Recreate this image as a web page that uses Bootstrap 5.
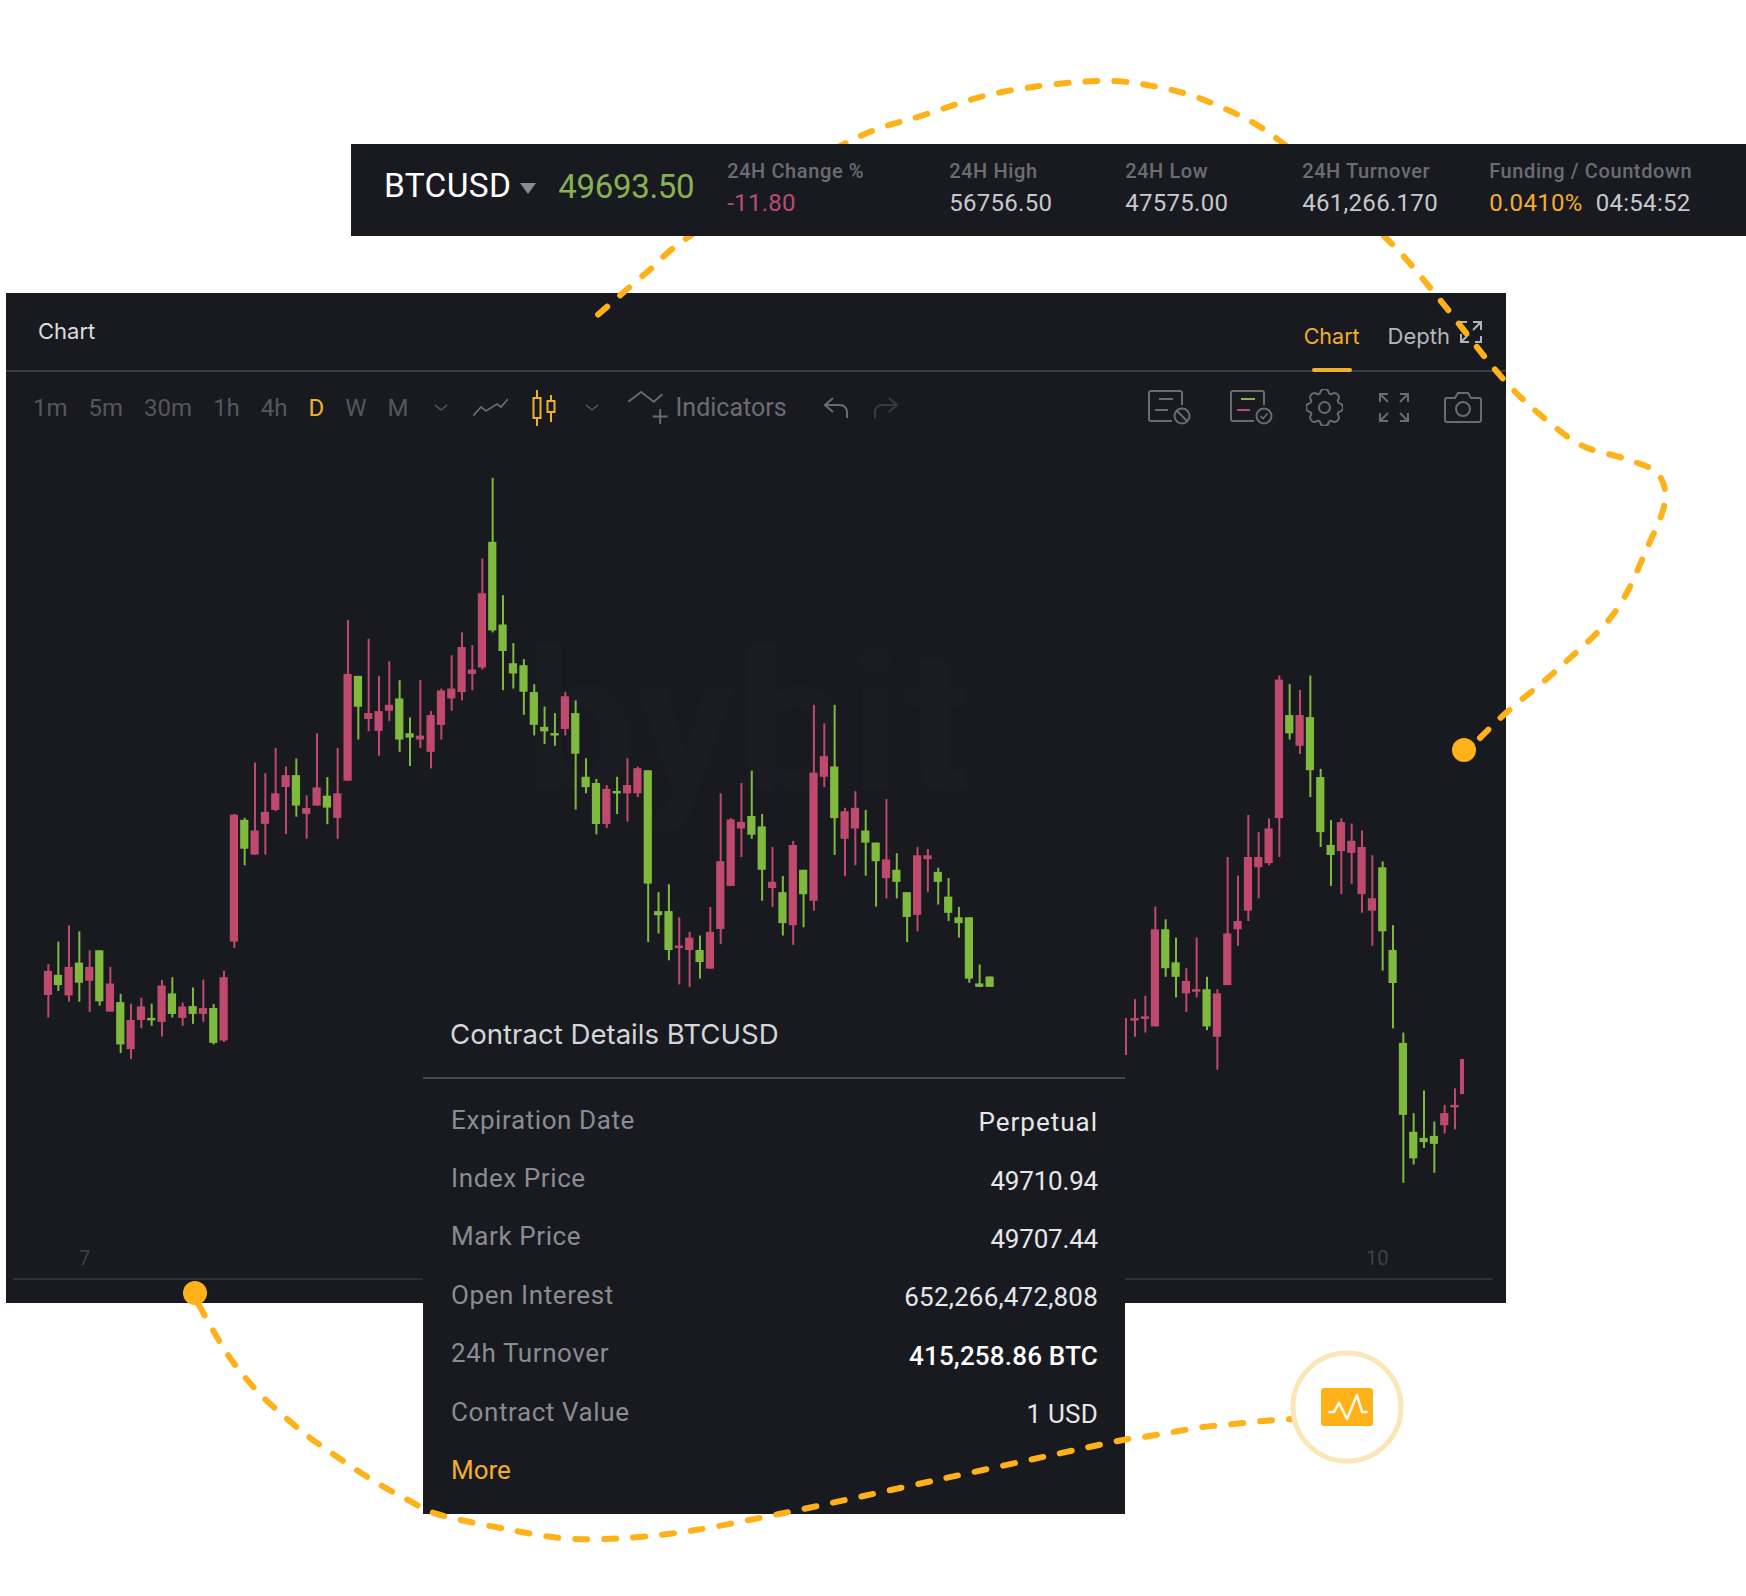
<!DOCTYPE html>
<html lang="en">
<head>
  <meta charset="UTF-8" />
  <meta name="viewport" content="width=device-width, initial-scale=1" />
  <title>BTCUSD Chart</title>
  <link href="https://cdn.jsdelivr.net/npm/bootstrap@5.3.2/dist/css/bootstrap.min.css" rel="stylesheet" />
  <style>
    body { margin: 0; background: #fff; font-family: Roboto, "Liberation Sans", sans-serif; }
    .stage { width: 1746px; height: 1596px; overflow: hidden; padding-top: 144px; }
    .ticker { margin-left: 351px; height: 92px; background: #181a20; padding-left: 33px; z-index: 3; }
    .sym { font-size: 33.5px; color: #fff; line-height: 1; letter-spacing: .3px; margin-top: -8px; }
    .caret { width: 0; height: 0; border-left: 8px solid transparent; border-right: 8px solid transparent; border-top: 11px solid #8c8c8c; margin: -4px 0 0 9px; }
    .last-price { font-size: 33px; color: #86b254; line-height: 1; margin: -7px 0 0 22px; width: 132px; letter-spacing: -.3px; }
    .tcol { line-height: 1; margin-top: -5px; }
    .tcol-chg { margin-left: 37px; width: 222px; }
    .tcol-hi { width: 176px; }
    .tcol-lo { width: 177px; }
    .tcol-to { width: 187px; }
    .tlabel { font-size: 20px; font-weight: 500; color: #6c6d73; letter-spacing: .6px; margin-bottom: 10px; white-space: nowrap; }
    .tval { font-size: 24px; color: #c8c9cc; letter-spacing: .3px; white-space: nowrap; }
    .tval-red { color: #b84d70; }
    .tval-org { color: #f2ae2e; margin-right: 13px; }

    .panel { margin: 57px 0 0 6px; width: 1500px; height: 1010px; background: #181a20; z-index: 1; }
    .panel-head { height: 79px; border-bottom: 2px solid #3b3c41; padding: 0 24px 0 32px; }
    .panel-title { font-family: Inter, Roboto, sans-serif; font-size: 22px; color: #dcdddf; }
    .head-tab { font-family: Inter, Roboto, sans-serif; font-size: 22px; color: #b5b6ba; height: 77px; line-height: 86px; }
    .head-tab-on { color: #f2ae2e; font-size: 21.5px; margin-right: 28px; }
    .head-tab-on::after { content: ""; position: absolute; left: 8px; right: 8px; bottom: -2px; height: 4px; border-radius: 2px; background: #f2ae2e; }
    .expand-mini { margin-left: 10px; }
    .tools { height: 73px; padding: 0 24px 2px 27px; color: #55575d; font-size: 24px; }
    .tools-left { gap: 21px; }
    .tool-candle { margin-left: 3px; }
    .tool-chev2 { margin: 0 8px 0 8px; }
    .ind-label { color: #6b6c72; margin-left: 7px; font-size: 25px; }
    .tool-undo { margin-left: 16px; }
    .tool-redo { margin-left: 3px; }
    .tools-right svg { display: block; }
    .tool-on { color: #f2ae2e; }
    .chart-svg { display: block; }

    .details { left: 417px; top: 697px; width: 702px; height: 524px; background: #181a20; }
    .details-title { font-family: Inter, Roboto, sans-serif; font-size: 27.6px; color: #d5d6d8; height: 89px; padding: 26px 0 0 27px; line-height: 36px; border-bottom: 2px solid #47484d; }
    .details-body { padding: 12px 27px 0 28px; }
    .drow { height: 58.4px; font-size: 26px; }
    .dlabel { color: #8b8c90; letter-spacing: .6px; }
    .dval { color: #e6e7e8; margin-top: 5px; letter-spacing: -.2px; }
    .dval-wide { letter-spacing: .2px; }
    .dval-word { letter-spacing: 1px; }
    .dval-strong { color: #fff; font-weight: 500; }
    .dmore { color: #f2ae2e; }

    .overlay { left: 0; top: 0; z-index: 2; pointer-events: none; }
  </style>
</head>
<body>
  <div class="stage position-relative">

    <div class="ticker d-flex align-items-center position-relative">
      <div class="sym">BTCUSD</div>
      <div class="caret"></div>
      <div class="last-price">49693.50</div>
      <div class="tcol tcol-chg">
        <div class="tlabel">24H Change %</div>
        <div class="tval tval-red">-11.80</div>
      </div>
      <div class="tcol tcol-hi">
        <div class="tlabel">24H High</div>
        <div class="tval">56756.50</div>
      </div>
      <div class="tcol tcol-lo">
        <div class="tlabel">24H Low</div>
        <div class="tval">47575.00</div>
      </div>
      <div class="tcol tcol-to">
        <div class="tlabel">24H Turnover</div>
        <div class="tval">461,266.170</div>
      </div>
      <div class="tcol">
        <div class="tlabel">Funding / Countdown</div>
        <div class="tval"><span class="tval-org">0.0410%</span>04:54:52</div>
      </div>
    </div>

    <div class="panel position-relative">
      <div class="panel-head d-flex align-items-center justify-content-between">
        <div class="panel-title">Chart</div>
        <div class="d-flex align-items-center">
          <div class="head-tab head-tab-on position-relative">Chart</div>
          <div class="head-tab">Depth</div>
          <svg width="22" height="22" viewBox="0 0 22 22" fill="none" stroke="#b3b4b8" stroke-width="2" class="expand-mini">
            <path d="M13 1h8v8M21 1l-8 8M1 13v8h8M1 21l8-8M1 7V1h6M21 15v6h-6" />
          </svg>
        </div>
      </div>

      <div class="tools d-flex align-items-center justify-content-between">
        <div class="tools-left d-flex align-items-center">
          <span>1m</span><span>5m</span><span>30m</span><span>1h</span><span>4h</span>
          <span class="tool-on">D</span><span>W</span><span>M</span>
          <svg width="14" height="8" viewBox="0 0 14 8" fill="none" stroke="#55575d" stroke-width="1.6" class="ms-1"><path d="M1 1l6 5 6-5" /></svg>
          <svg width="35" height="19" viewBox="0 0 35 19" fill="none" stroke="#6b6c72" stroke-width="1.8" class="ms-1"><path d="M0 18l8-9 5 4 11-7 4 3 7-8" /></svg>
          <svg width="24" height="36" viewBox="0 0 24 36" fill="none" stroke="#f2ae2e" stroke-width="2" class="tool-candle"><path d="M5 0v36M19 5v27" /><rect x="1.5" y="8" width="7" height="20" fill="#181a20" /><rect x="15.5" y="11" width="7" height="11" fill="#181a20" /></svg>
          <svg width="14" height="8" viewBox="0 0 14 8" fill="none" stroke="#55575d" stroke-width="1.6" class="tool-chev2"><path d="M1 1l6 5 6-5" /></svg>
          <div class="d-flex align-items-center">
            <svg width="41" height="33" viewBox="0 0 38 31" fill="none" stroke="#6b6c72" stroke-width="1.8"><path d="M0 10l12-9 12 9 8-7M30 17v14M23 24h14" /></svg>
            <span class="ind-label">Indicators</span>
          </div>
          <svg width="25" height="22" viewBox="0 0 25 22" fill="none" stroke="#6b6c72" stroke-width="2" class="tool-undo"><path d="M9 1L1 8l8 7M1 8h15a7 7 0 0 1 7 7v6" /></svg>
          <svg width="25" height="22" viewBox="0 0 25 22" fill="none" stroke="#3a3c42" stroke-width="2" class="tool-redo"><path d="M16 1l8 7-8 7M24 8H9a7 7 0 0 0-7 7v6" /></svg>
        </div>
        <div class="tools-right d-flex align-items-center">
          <svg width="44" height="35" viewBox="0 0 44 35" fill="none" stroke="#6b6c72" stroke-width="2" style="margin-right:38px">
            <path d="M34 15V3a2 2 0 0 0-2-2H3a2 2 0 0 0-2 2v26a2 2 0 0 0 2 2h21M11 9h14M7 20h13" />
            <circle cx="34" cy="26" r="7.5" /><path d="M29 21l10 10" />
          </svg>
          <svg width="44" height="35" viewBox="0 0 44 35" fill="none" stroke="#6b6c72" stroke-width="2" style="margin-right:32px">
            <path d="M34 15V3a2 2 0 0 0-2-2H3a2 2 0 0 0-2 2v26a2 2 0 0 0 2 2h21" />
            <path d="M11 9h14" stroke="#86b254" /><path d="M7 20h13" stroke="#b84d70" />
            <circle cx="34" cy="26" r="7.5" /><path d="M30.5 26l2.5 2.5 4.5-5" stroke-width="1.6" />
          </svg>
          <svg width="37" height="37" viewBox="0 0 16 16" fill="none" stroke="#6b6c72" stroke-width=".85" style="margin-right:36px">
            <path d="M9.796 1.343c-.527-1.79-3.065-1.79-3.592 0l-.094.319a.873.873 0 0 1-1.255.52l-.292-.16c-1.64-.892-3.433.902-2.54 2.541l.159.292a.873.873 0 0 1-.52 1.255l-.319.094c-1.79.527-1.79 3.065 0 3.592l.319.094a.873.873 0 0 1 .52 1.255l-.16.292c-.892 1.64.901 3.434 2.541 2.54l.292-.159a.873.873 0 0 1 1.255.52l.094.319c.527 1.79 3.065 1.79 3.592 0l.094-.319a.873.873 0 0 1 1.255-.52l.292.16c1.64.893 3.434-.902 2.54-2.541l-.159-.292a.873.873 0 0 1 .52-1.255l.319-.094c1.79-.527 1.79-3.065 0-3.592l-.319-.094a.873.873 0 0 1-.52-1.255l.16-.292c.893-1.64-.902-3.433-2.541-2.54l-.292.159a.873.873 0 0 1-1.255-.52l-.094-.319z" />
            <circle cx="8" cy="8" r="2.4" />
          </svg>
          <svg width="30" height="29" viewBox="0 0 30 29" fill="none" stroke="#6b6c72" stroke-width="2" style="margin-right:35px">
            <path d="M1 9V1h8M1 1l8 8M21 1h8v8M29 1l-8 8M1 20v8h8M1 28l8-8M21 28h8v-8M29 28l-8-8" />
          </svg>
          <svg width="38" height="31" viewBox="0 0 38 31" fill="none" stroke="#6b6c72" stroke-width="2">
            <path d="M3 6h8l3-5h10l3 5h8a2 2 0 0 1 2 2v20a2 2 0 0 1-2 2H3a2 2 0 0 1-2-2V8a2 2 0 0 1 2-2z" />
            <circle cx="19" cy="17" r="7" />
          </svg>
        </div>
      </div>

      <svg id="chart" class="chart-svg" width="1500" height="858" viewBox="6 445 1500 858" xmlns="http://www.w3.org/2000/svg">
        <text x="525" y="790" font-family="Roboto, sans-serif" font-weight="700" font-size="195" fill="#1b1c21" textLength="445">bybit</text>
        <line x1="13" y1="1279" x2="1493" y2="1279" stroke="#2f3036" stroke-width="2" />
        <text x="79" y="1265" font-family="Roboto, sans-serif" font-size="20" fill="#3f4147">7</text>
        <text x="1366" y="1265" font-family="Roboto, sans-serif" font-size="20" fill="#3f4147">10</text>
      </svg>

      <div class="details position-absolute">
        <div class="details-title">Contract Details BTCUSD</div>
        <div class="details-body">
          <div class="drow d-flex align-items-center justify-content-between"><span class="dlabel">Expiration Date</span><span class="dval dval-word">Perpetual</span></div>
          <div class="drow d-flex align-items-center justify-content-between"><span class="dlabel">Index Price</span><span class="dval">49710.94</span></div>
          <div class="drow d-flex align-items-center justify-content-between"><span class="dlabel">Mark Price</span><span class="dval">49707.44</span></div>
          <div class="drow d-flex align-items-center justify-content-between"><span class="dlabel">Open Interest</span><span class="dval dval-wide">652,266,472,808</span></div>
          <div class="drow d-flex align-items-center justify-content-between"><span class="dlabel">24h Turnover</span><span class="dval dval-wide dval-strong">415,258.86 BTC</span></div>
          <div class="drow d-flex align-items-center justify-content-between"><span class="dlabel">Contract Value</span><span class="dval dval-wide">1 USD</span></div>
          <div class="drow d-flex align-items-center"><span class="dmore">More</span></div>
        </div>
      </div>
    </div>

    <svg id="lines" class="overlay position-absolute" width="1746" height="1596" viewBox="0 0 1746 1596" xmlns="http://www.w3.org/2000/svg"></svg>
  </div>

  <script>
    const RED = '#bf4a6e', GREEN = '#7fba3f';
    const NS = 'http://www.w3.org/2000/svg';

    // x, wick top, wick bottom, body top, body bottom, colour
    const left = [
      [142,1275,1410,1292,1353,'r'],[172,1218,1343,1302,1328,'g'],[204,1177,1370,1282,1354,'r'],[235,1192,1370,1271,1322,'g'],
      [266,1240,1396,1282,1317,'r'],[296,1240,1380,1240,1369,'g'],[328,1282,1395,1324,1395,'r'],[359,1350,1500,1371,1478,'g'],
      [390,1375,1515,1416,1490,'r'],[421,1360,1437,1382,1416,'r'],[452,1375,1431,1411,1416,'g'],[483,1315,1458,1329,1421,'r'],
      [514,1308,1410,1349,1401,'g'],[545,1372,1431,1382,1411,'r'],[576,1334,1426,1381,1401,'g'],[607,1314,1421,1386,1401,'r'],
      [638,1376,1478,1386,1474,'g'],[669,1292,1472,1308,1468,'r'],[700,895,1234,897,1218,'r'],[731,905,1025,910,983,'g'],
      [762,765,998,937,998,'r'],[793,792,998,890,920,'r'],[824,728,888,843,885,'r'],[855,775,946,797,827,'r'],
      [886,755,902,797,874,'g'],[917,848,958,880,895,'r'],[948,691,874,828,874,'r'],[979,802,921,849,879,'g'],
      [1010,728,958,843,905,'r'],[1041,405,811,541,811,'r'],[1072,546,707,546,624,'g'],[1103,452,686,640,655,'r'],
      [1134,546,748,635,685,'r'],[1165,509,660,619,634,'r'],[1196,557,738,603,707,'g'],[1227,651,774,691,702,'g'],
      [1258,556,728,697,707,'r'],[1290,635,780,645,738,'r'],[1321,578,707,583,670,'r'],[1352,494,634,578,603,'r'],
      [1383,436,608,473,587,'r'],[1414,468,582,530,541,'r'],[1444,249,530,337,525,'r'],[1475,45,436,207,431,'g'],
      [1506,342,582,416,483,'g'],[1537,463,578,514,540,'g']
    ];
    const middle = [
      [224,578,740,596,673,'g'],[252,651,800,674,769,'g'],[280,716,825,775,788,'g'],[308,735,830,793,800,'g'],
      [336,673,800,686,781,'r'],[364,698,1015,735,853,'g'],[392,866,968,920,950,'g'],[420,926,1087,938,1057,'g'],
      [448,944,1069,955,1057,'r'],[476,920,1028,961,968,'g'],[504,866,1050,944,968,'r'],[532,890,979,895,968,'r'],
      [560,901,1400,901,1230,'g'],[588,1255,1375,1310,1322,'g'],[616,1232,1453,1310,1423,'g'],[644,1328,1523,1410,1417,'r'],
      [672,1370,1530,1387,1423,'r'],[700,1381,1506,1423,1458,'g'],[728,1298,1477,1370,1477,'r'],[756,968,1406,1165,1362,'r'],
      [784,1040,1237,1044,1237,'r'],[812,938,1153,1051,1070,'r'],[840,902,1100,1034,1088,'g'],[868,1028,1280,1064,1190,'g'],
      [896,1124,1298,1225,1243,'r'],[924,1208,1381,1255,1345,'g'],[952,1106,1408,1118,1351,'r'],[980,1190,1357,1190,1261,'g'],
      [1008,711,1309,908,1280,'r'],[1036,765,950,860,920,'r'],[1064,711,1147,890,1040,'g'],[1092,1010,1208,1020,1100,'r'],
      [1120,962,1177,1010,1070,'r'],[1148,1016,1207,1076,1111,'g'],[1176,1111,1297,1111,1165,'g'],[1204,985,1273,1160,1214,'r'],
      [1232,1142,1273,1190,1225,'g'],[1260,1255,1400,1255,1327,'g'],[1288,1124,1369,1148,1321,'r'],[1316,1130,1255,1148,1159,'r'],
      [1344,1184,1291,1196,1225,'g'],[1372,1214,1339,1268,1315,'g'],[1400,1298,1387,1328,1345,'g'],[1428,1328,1518,1328,1506,'g'],
      [1456,1465,1530,1520,1530,'g'],[1484,1500,1530,1500,1530,'g']
    ];
    const right = [
      [72,985,1094,1040,1045,'r'],[103,975,1082,1035,1040,'r'],[133,716,1064,782,1064,'r'],[164,753,920,782,895,'g'],
      [195,806,980,878,920,'g'],[226,895,1022,932,968,'r'],[257,806,980,956,962,'r'],[288,920,1075,956,1064,'g'],
      [319,956,1190,968,1094,'r'],[350,572,944,794,944,'r'],[381,626,830,758,782,'r'],[412,450,758,572,728,'r'],
      [443,500,692,572,602,'r'],[474,460,596,489,590,'r'],[505,45,572,57,459,'r'],[536,70,231,160,213,'g'],
      [567,87,273,160,249,'r'],[598,45,398,166,320,'g'],[629,316,543,340,500,'g'],[660,465,656,537,566,'g'],
      [691,460,680,471,555,'r'],[722,475,650,525,560,'r'],[753,495,734,543,680,'r'],[784,567,830,692,728,'r'],
      [815,585,902,602,788,'g'],[846,770,1070,842,938,'g'],[877,1082,1518,1112,1321,'g'],[908,1316,1465,1370,1447,'g'],
      [939,1250,1417,1388,1400,'g'],[970,1340,1489,1382,1405,'g'],[1001,1292,1375,1316,1351,'r'],[1032,1244,1363,1292,1298,'r']
    ];

    function addEl(parent, name, attrs) {
      const el = document.createElementNS(NS, name);
      Object.keys(attrs).forEach(k => el.setAttribute(k, attrs[k]));
      parent.appendChild(el);
      return el;
    }

    function drawCandles(list, toX, toY) {
      const chart = document.getElementById('chart');
      list.forEach(c => {
        const fill = c[5] === 'r' ? RED : GREEN;
        const x = toX(c[0]);
        addEl(chart, 'rect', { x: x, y: toY(c[1]), width: 2, height: toY(c[2]) - toY(c[1]), fill });
        addEl(chart, 'rect', { x: x - 3.5, y: toY(c[3]), width: 8.2, height: Math.max(2.5, toY(c[4]) - toY(c[3])), fill });
      });
    }

    drawCandles(left, x => x / 3, y => 460 + y / 2.529);
    drawCandles(middle, x => 440 + x / 2.703, y => 460 + y / 2.904);
    drawCandles(right, x => 1110 + x / 3, y => 660 + y / 2.904);

    const chartEl = document.getElementById('chart');
    addEl(chartEl, 'rect', { x: 1125, y: 1018, width: 2, height: 37, fill: RED });
    addEl(chartEl, 'rect', { x: 1460, y: 1059, width: 4, height: 35, fill: RED });

    // smooth curve through the points (catmull-rom)
    function curve(pts) {
      let d = `M${pts[0][0]} ${pts[0][1]}`;
      for (let i = 0; i < pts.length - 1; i++) {
        const p0 = pts[i - 1] || pts[i], p1 = pts[i], p2 = pts[i + 1], p3 = pts[i + 2] || p2;
        const c1 = [p1[0] + (p2[0] - p0[0]) / 6, p1[1] + (p2[1] - p0[1]) / 6];
        const c2 = [p2[0] - (p3[0] - p1[0]) / 6, p2[1] - (p3[1] - p1[1]) / 6];
        d += `C${c1[0]} ${c1[1]} ${c2[0]} ${c2[1]} ${p2[0]} ${p2[1]}`;
      }
      return d;
    }

    const lines = document.getElementById('lines');
    const ORANGE = '#ffb11a';
    const dash = { fill: 'none', stroke: ORANGE, 'stroke-width': 6, 'stroke-linecap': 'round', 'stroke-dasharray': '12 17' };

    addEl(lines, 'path', Object.assign({ d: curve([
      [1480,738],[1507,712],[1559,668],[1615,612],[1648,546],[1665,501],[1657,473],[1626,459],[1581,445],[1537,412],
      [1498,373],[1436,295],[1384,236],[1280,141],[1214,104],[1158,87],[1097,81],[1002,92],[924,115],[846,143],
      [696,232],[646,273],[592,320]
    ]) }, dash));
    addEl(lines, 'path', Object.assign({ d: curve([
      [199,1305],[210,1325],[226,1352],[243,1375],[263,1397],[286,1418],[309,1437],[333,1454],[358,1471],[384,1487],
      [410,1501],[437,1514],[501,1528],[575,1539],[668,1534],[779,1514],[946,1478],[1113,1442],[1144,1437],[1173,1432],
      [1203,1427],[1233,1424],[1263,1421],[1292,1419]
    ]) }, dash));

    addEl(lines, 'circle', { cx: 1464, cy: 750, r: 12, fill: ORANGE });
    addEl(lines, 'circle', { cx: 195, cy: 1293, r: 12, fill: ORANGE });

    // pulse badge at the end of the second line
    addEl(lines, 'circle', { cx: 1347, cy: 1407, r: 54, fill: '#fff', stroke: '#fbe6b8', 'stroke-width': 5 });
    addEl(lines, 'rect', { x: 1321, y: 1388, width: 52, height: 38, rx: 3, fill: ORANGE });
    addEl(lines, 'polyline', { points: '1329,1412 1334,1412 1339,1403 1347,1419 1357,1395 1362,1412 1367,1412', fill: 'none', stroke: '#fff8e6', 'stroke-width': 2.6, 'stroke-linejoin': 'round', 'stroke-linecap': 'round' });
  </script>
  <script src="https://cdn.jsdelivr.net/npm/bootstrap@5.3.2/dist/js/bootstrap.bundle.min.js"></script>
</body>
</html>
